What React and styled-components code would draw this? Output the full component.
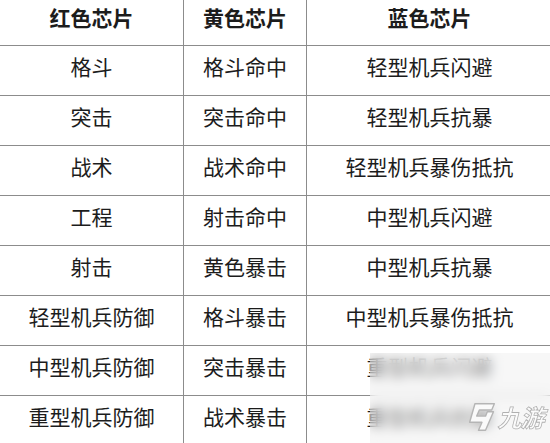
import React from "react";
import styled, { createGlobalStyle } from "styled-components";

const rows = [
  ["格斗", "格斗命中", "轻型机兵闪避"],
  ["突击", "突击命中", "轻型机兵抗暴"],
  ["战术", "战术命中", "轻型机兵暴伤抵抗"],
  ["工程", "射击命中", "中型机兵闪避"],
  ["射击", "黄色暴击", "中型机兵抗暴"],
  ["轻型机兵防御", "格斗暴击", "中型机兵暴伤抵抗"],
  ["中型机兵防御", "突击暴击", "重型机兵闪避"],
  ["重型机兵防御", "战术暴击", "重型机兵抗暴"],
];

const App = () => {
  return (
    <>
      <GlobalStyle />
      <Page>
        <Grid>
          <Cell header>红色芯片</Cell>
          <Cell header>黄色芯片</Cell>
          <Cell header last>蓝色芯片</Cell>
          {rows.map((r, i) =>
            r.map((t, j) => (
              <Cell key={i + "-" + j} last={j === 2}>
                {t}
              </Cell>
            ))
          )}
        </Grid>
        <Watermark>
          <Logo>
            <svg width="30" height="34" viewBox="0 0 34 36">
              <path
                d="M9 3 L31 3 L28 10 L14 10 L11 17 L21 17 L23 12 L30 12 L21 33 L13 33 L17 24 L3 24 Z"
                fill="#fafafa"
                stroke="#b5b5b5"
                strokeWidth="1.6"
                strokeLinejoin="round"
              />
            </svg>
            <LogoText>九游</LogoText>
          </Logo>
        </Watermark>
      </Page>
    </>
  );
};

const GlobalStyle = createGlobalStyle`
  html, body {
    margin: 0;
    padding: 0;
    background: #ffffff;
    overflow: hidden;
  }
`;

const Page = styled.div`
  position: relative;
  width: 550px;
  height: 443px;
  overflow: hidden;
  background: #fff;
`;

const Grid = styled.div`
  display: grid;
  grid-template-columns: 184px 123px 1fr;
  margin-top: -4px;
  width: 552px;
  font-family: "Noto Sans CJK SC", "Noto Sans", sans-serif;
  color: #1c1c1c;
`;

const Cell = styled.div`
  box-sizing: border-box;
  height: 50px;
  display: flex;
  align-items: center;
  justify-content: center;
  font-size: 21px;
  line-height: 24px;
  font-weight: ${(p) => (p.header ? 700 : 400)};
  border-bottom: 1px solid #8c8c8c;
  border-right: ${(p) => (p.last ? "none" : "1px solid #8c8c8c")};
  padding-bottom: ${(p) => (p.header ? "8px" : "10px")};
  white-space: nowrap;
`;

const Watermark = styled.div`
  position: absolute;
  left: 370px;
  top: 353px;
  right: 0;
  bottom: 0;
  background: rgba(238, 238, 238, 0.45);
  backdrop-filter: blur(6px);
  display: flex;
  align-items: flex-end;
  justify-content: flex-end;
  padding: 0 4px 9px 0;
`;

const Logo = styled.div`
  display: flex;
  align-items: center;
  gap: 3px;
`;

const LogoText = styled.span`
  display: inline-block;
  font-family: "Noto Sans CJK SC", sans-serif;
  font-size: 24px;
  line-height: 30px;
  font-weight: 700;
  color: #fbfbfb;
  -webkit-text-stroke: 0.8px #b0b0b0;
  transform: skewX(-14deg);
  letter-spacing: -1px;
`;

export default App;
